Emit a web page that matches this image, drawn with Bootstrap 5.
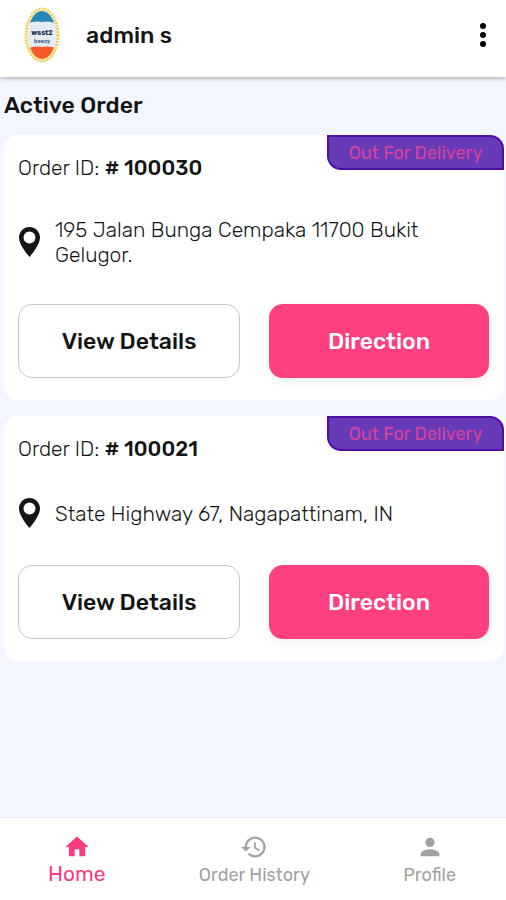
<!DOCTYPE html>
<html lang="en">
<head>
<meta charset="utf-8">
<meta name="viewport" content="width=device-width, initial-scale=1">
<title>Active Order</title>
<link href="https://cdn.jsdelivr.net/npm/bootstrap@5.3.0/dist/css/bootstrap.min.css" rel="stylesheet">
<style>
  body { font-family: Rubik, Roboto, "Liberation Sans", sans-serif; background: #f3f6fe; color: #141414; font-size: 21px; line-height: 25px; font-weight: 340; }
  .app-header { height: 77px; padding: 0 11px 8px 24px; background: #fff; box-shadow: 0 1px 5px rgba(0,0,0,.35); }
  .user-name { font-size: 23px; line-height: 28px; font-weight: 500; margin-left: 26px; }
  .icon-button { width: 24px; height: 32px; }
  .page-title { font-size: 23px; line-height: 28px; font-weight: 500; margin: 14px 0 16px; }
  .orders { padding: 0 2px 0 4px; }
  .order-list { gap: 16px; }
  .order { border-radius: 14px; padding: 20px 15px 22px 14px; }
  .status { width: 177px; height: 35px; font-size: 18px; line-height: 32px; font-weight: 400; color: #d8419b; background: #673ab7; border: 2px solid #4f0da6; border-radius: 0 14px 0 14px; }
  .number { font-weight: 500; }
  .address { margin: 37px 0; gap: 15px; min-height: 30px; }
  .address svg { margin-left: 1px; }
  .actions { gap: 29px; }
  .action { flex: 1 1 0; height: 74px; border-radius: 14px; font-size: 23px; font-weight: 500; }
  .action-outline, .action-outline:hover { background: #fff; color: #141414; border: 1px solid #c8c8c8; }
  .action-main, .action-main:hover { background: #ff4080; color: #fff; border: 0; box-shadow: 0 3px 12px rgba(0,0,0,.07); }
  .tabs { height: 83px; padding: 15px 50px 0 48px; background: #fff; border-top: 1px solid #e9ebf0; }
  .tab { color: #a0a2a2; font-size: 18px; line-height: 28px; font-weight: 400; }
  .tab.active { color: #f63c7d; font-size: 21px; line-height: 26px; }
</style>
<script src="https://cdn.jsdelivr.net/npm/bootstrap@5.3.0/dist/js/bootstrap.bundle.min.js" defer></script>
</head>
<body>
<div class="d-flex flex-column min-vh-100">
  <header class="app-header d-flex align-items-center position-relative">
    <svg width="36" height="56" viewBox="0 0 36 56" role="img" aria-label="Store logo">
      <defs><clipPath id="seal"><ellipse cx="18" cy="28" rx="14" ry="24"/></clipPath></defs>
      <ellipse cx="18" cy="28" rx="16" ry="26" fill="#fff8cf" stroke="#edd060" stroke-width="3" stroke-dasharray="2 1"/>
      <g clip-path="url(#seal)">
        <rect width="36" height="56" fill="#e4ebf3"/>
        <path d="M0 0h36v18Q27 13 18 15Q9 13 0 18z" fill="#2787b5"/>
        <path d="M0 56h36V43Q27 38 18 40Q9 38 0 43z" fill="#f65a28"/>
      </g>
      <text x="18" y="28" text-anchor="middle" font-family="Roboto, sans-serif" font-size="8" font-weight="900" fill="#172b50">wsst2</text>
      <text x="18" y="36" text-anchor="middle" font-family="Roboto, sans-serif" font-size="6" font-weight="700" fill="#45617d">beezy</text>
    </svg>
    <span class="user-name">admin s</span>
    <button type="button" class="icon-button btn p-0 border-0 ms-auto d-flex align-items-center justify-content-center" aria-label="More options">
      <svg width="8" height="26" viewBox="0 0 8 26" fill="#000"><circle cx="4" cy="4" r="3"/><circle cx="4" cy="13" r="3"/><circle cx="4" cy="22" r="3"/></svg>
    </button>
  </header>

  <main class="orders flex-grow-1">
    <h1 class="page-title">Active Order</h1>
    <div class="order-list d-flex flex-column">
      <article class="order bg-white position-relative">
        <div class="status position-absolute top-0 end-0 text-center">Out For Delivery</div>
        <div>Order ID: <span class="number"># 100030</span></div>
        <div class="address d-flex align-items-center">
          <svg class="flex-shrink-0" width="21" height="30" viewBox="0 0 21 30" fill="#141414" aria-hidden="true"><path fill-rule="evenodd" d="M10.500 0C4.700 0 0 4.700 0 10.500C0 18.300 10.500 30 10.500 30S21 18.300 21 10.500C21 4.700 16.300 0 10.500 0zM10.500 4.500a6 6 0 1 1 0 12a6 6 0 0 1 0-12z"/></svg>
          <div>195 Jalan Bunga Cempaka 11700 Bukit Gelugor.</div>
        </div>
        <div class="actions d-flex">
          <button type="button" class="action action-outline btn">View Details</button>
          <button type="button" class="action action-main btn">Direction</button>
        </div>
      </article>
      <article class="order bg-white position-relative">
        <div class="status position-absolute top-0 end-0 text-center">Out For Delivery</div>
        <div>Order ID: <span class="number"># 100021</span></div>
        <div class="address d-flex align-items-center">
          <svg class="flex-shrink-0" width="21" height="30" viewBox="0 0 21 30" fill="#141414" aria-hidden="true"><path fill-rule="evenodd" d="M10.500 0C4.700 0 0 4.700 0 10.500C0 18.300 10.500 30 10.500 30S21 18.300 21 10.500C21 4.700 16.300 0 10.500 0zM10.500 4.500a6 6 0 1 1 0 12a6 6 0 0 1 0-12z"/></svg>
          <div>State Highway 67, Nagapattinam, IN</div>
        </div>
        <div class="actions d-flex">
          <button type="button" class="action action-outline btn">View Details</button>
          <button type="button" class="action action-main btn">Direction</button>
        </div>
      </article>
    </div>
  </main>

  <nav class="tabs d-flex align-items-start justify-content-between sticky-bottom" aria-label="Main">
    <a href="#" class="tab active d-flex flex-column align-items-center text-decoration-none" aria-current="page">
      <svg width="28" height="28" viewBox="0 0 24 24" fill="currentColor" aria-hidden="true"><path d="M10 20v-6h4v6h5v-8h3L12 3 2 12h3v8z"/></svg>
      Home
    </a>
    <a href="#" class="tab d-flex flex-column align-items-center text-decoration-none">
      <svg width="28" height="28" viewBox="0 0 24 24" fill="currentColor" aria-hidden="true"><path d="M13 3a9 9 0 0 0-9 9H1l3.890 3.890.07.14L9 12H6c0-3.870 3.130-7 7-7s7 3.130 7 7-3.130 7-7 7c-1.930 0-3.680-.79-4.940-2.060l-1.420 1.420A8.954 8.954 0 0 0 13 21a9 9 0 0 0 0-18zm-1 5v5l4.280 2.540.72-1.210-3.500-2.080V8z"/></svg>
      Order History
    </a>
    <a href="#" class="tab d-flex flex-column align-items-center text-decoration-none">
      <svg width="28" height="28" viewBox="0 0 24 24" fill="currentColor" aria-hidden="true"><path d="M12 12a4 4 0 1 0 0-8 4 4 0 0 0 0 8zm0 2c-2.670 0-8 1.340-8 4v2h16v-2c0-2.660-5.330-4-8-4z"/></svg>
      Profile
    </a>
  </nav>
</div>
</body>
</html>
